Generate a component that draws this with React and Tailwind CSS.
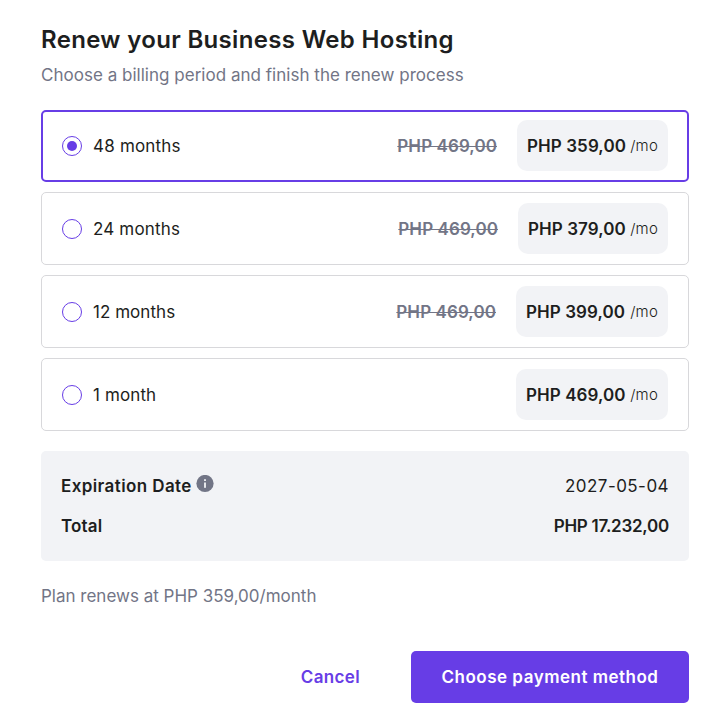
import { useState } from 'react';

const plans = [
  { id: '48', label: '48 months', old: 'PHP 469,00', price: 'PHP 359,00', row: 'mb-2.5 h-[72px] border-2 border-[#673de6] px-[19px]', prices: 'pb-px', pill: 'w-[151px]', text: 'tracking-[0.2px]' },
  { id: '24', label: '24 months', old: 'PHP 469,00', price: 'PHP 379,00', row: 'mb-2.5 h-[73px] border border-[#d8d8db] px-5', prices: '', pill: 'w-[150px]', text: 'tracking-[0.16px]' },
  { id: '12', label: '12 months', old: 'PHP 469,00', price: 'PHP 399,00', row: 'mb-2.5 h-[73px] border border-[#d8d8db] px-5', prices: '', pill: 'w-[152px]', text: 'tracking-[0.04px]' },
  { id: '1', label: '1 month', old: null, price: 'PHP 469,00', row: 'h-[73px] border border-[#d8d8db] px-5', prices: '', pill: 'w-[152px]', text: 'tracking-[0.12px]' },
];

function Radio({ checked }) {
  return (
    <span className="flex size-5 shrink-0 items-center justify-center rounded-full border border-[#673de6]">
      {checked && <span className="size-2.5 rounded-full bg-[#673de6]" />}
    </span>
  );
}

function PlanRow({ plan, checked, onSelect }) {
  return (
    <div onClick={onSelect} className={`flex items-center rounded-[5px] ${plan.row}`}>
      <Radio checked={checked} />
      <span className={`ml-[11px] text-[17px] leading-6 ${plan.text}`}>{plan.label}</span>
      <div className={`ml-auto flex items-center gap-5 ${plan.prices}`}>
        {plan.old && (
          <span className="text-[17px] leading-6 font-semibold tracking-[0.08px] text-[#727586] line-through decoration-1">{plan.old}</span>
        )}
        <span className={`flex h-[51px] items-center justify-between whitespace-nowrap rounded-[10px] bg-[#f2f3f6] px-2.5 ${plan.pill}`}>
          <span className="text-[17px] leading-6 font-semibold tracking-[0.08px]">{plan.price}</span>
          <span className="text-[15px] leading-6 font-light tracking-[0.2px]">/mo</span>
        </span>
      </div>
    </div>
  );
}

function InfoIcon() {
  return (
    <svg className="mb-[5px] ml-1 size-[18px]" viewBox="0 0 18 18">
      <circle cx="9" cy="8.5" r="8.6" fill="#727586" />
      <rect x="8.1" y="4.2" width="1.8" height="1.8" fill="#f2f3f6" />
      <rect x="8.1" y="7.5" width="1.8" height="5.3" fill="#f2f3f6" />
    </svg>
  );
}

export default function App() {
  const [selected, setSelected] = useState('48');
  return (
    <main className="h-[719px] w-[718px] overflow-hidden bg-white pl-[41px] pr-[29px] pt-6 font-['Inter',sans-serif] text-[#1d1e20]">
      <h1 className="h-8 whitespace-nowrap text-[24px] leading-8 font-semibold tracking-[0.33px]">Renew your Business Web Hosting</h1>
      <p className="mt-[7px] mb-[23px] h-6 whitespace-nowrap text-[17px] leading-6 tracking-[0.02px] text-[#727586]">Choose a billing period and finish the renew process</p>
      {plans.map((plan) => (
        <PlanRow key={plan.id} plan={plan} checked={selected === plan.id} onSelect={() => setSelected(plan.id)} />
      ))}
      <section className="mt-5 flex h-[110px] flex-col justify-center gap-4 rounded-[5px] bg-[#f2f3f6] px-5 text-[17px] leading-6">
        <div className="flex h-6 items-center justify-between">
          <span className="flex items-center font-semibold tracking-[0.4px]">Expiration Date<InfoIcon /></span>
          <span className="tracking-[0.45px]">2027-05-04</span>
        </div>
        <div className="flex h-6 items-center justify-between font-semibold">
          <span className="tracking-[0.15px]">Total</span>
          <span className="tracking-[-0.25px]">PHP 17.232,00</span>
        </div>
      </section>
      <p className="mt-[23px] h-6 text-[17px] leading-6 text-[#727586]">Plan renews at PHP 359,00/month</p>
      <div className="mt-[43px] flex justify-end text-[17px] leading-6 font-semibold">
        <button className="mr-[51px] h-[52px] tracking-[0.35px] text-[#673de6]">Cancel</button>
        <button className="h-[52px] w-[278px] rounded-[5px] bg-[#673de6] tracking-[0.5px] text-white">Choose payment method</button>
      </div>
    </main>
  );
}
